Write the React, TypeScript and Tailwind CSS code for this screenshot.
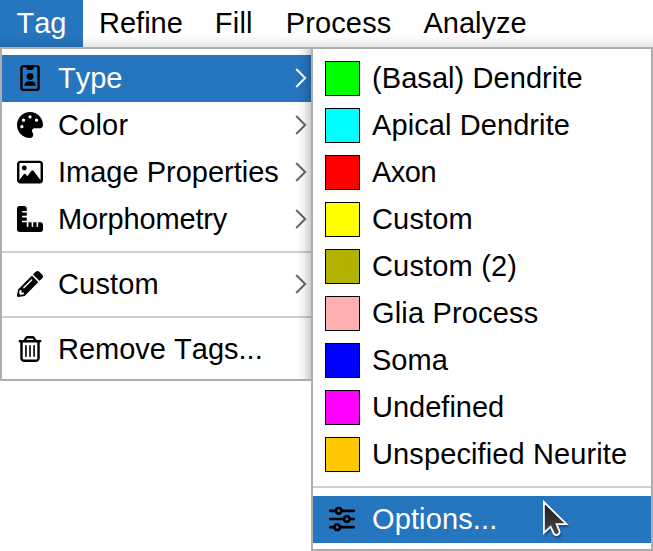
import type { ReactNode } from "react";
import { FaPencilAlt } from "react-icons/fa";
import { FaPalette, FaRegImage, FaRegTrashCan, FaRulerCombined } from "react-icons/fa6";

const types = [
  { label: "(Basal) Dendrite", color: "bg-[#00ff00]", tracking: "tracking-[0.07px]" },
  { label: "Apical Dendrite", color: "bg-[#00ffff]", tracking: "tracking-[0.09px]" },
  { label: "Axon", color: "bg-[#ff0000]", tracking: "tracking-[-0.5px]" },
  { label: "Custom", color: "bg-[#ffff00]", tracking: "tracking-[0.17px]" },
  { label: "Custom (2)", color: "bg-[#b2b200]", tracking: "tracking-[0.17px]" },
  { label: "Glia Process", color: "bg-[#ffafaf]", tracking: "tracking-[0.17px]" },
  { label: "Soma", color: "bg-[#0000ff]", tracking: "" },
  { label: "Undefined", color: "bg-[#ff00ff]", tracking: "" },
  { label: "Unspecified Neurite", color: "bg-[#ffc800]", tracking: "tracking-[0.11px]" },
];

function Chevron() {
  return (
    <svg className="mr-1 ml-auto shrink-0" width="12" height="20" viewBox="0 0 12 20" fill="none" stroke="currentColor" strokeWidth="2">
      <path d="M1.2 1 10.2 10 1.2 19" />
    </svg>
  );
}

function Badge() {
  return (
    <svg width="20" height="26" viewBox="0 0 384 512" fill="currentColor">
      <path
        fillRule="evenodd"
        d="M64 0H320A64 64 0 0 1 384 64V448A64 64 0 0 1 320 512H64A64 64 0 0 1 0 448V64A64 64 0 0 1 64 0ZM64 46A18 18 0 0 0 46 64V448A18 18 0 0 0 64 466H320A18 18 0 0 0 338 448V64A18 18 0 0 0 320 46H264V60A34 34 0 0 1 230 96H154A34 34 0 0 1 120 60V46Z"
      />
      <circle cx="192" cy="226" r="68" />
      <path d="M80 410C80 356 116 320 162 320H222C268 320 304 356 304 410Z" />
    </svg>
  );
}

function Sliders() {
  return (
    <svg width="26" height="26" viewBox="0 0 26 26" fill="none" stroke="currentColor" strokeWidth="2.7" strokeLinecap="round">
      <path d="M1.3 4.8H6.5M13 4.8H24.7M1.3 13H14.5M21 13H24.7M1.3 21.2H5M11.5 21.2H24.7" />
      <circle cx="9.7" cy="4.8" r="2.8" />
      <circle cx="17.8" cy="13" r="2.8" />
      <circle cx="8.2" cy="21.2" r="2.8" />
    </svg>
  );
}

type ItemProps = { icon: ReactNode; label: string; arrow?: boolean; selected?: boolean; tracking?: string };

function Item({ icon, label, arrow, selected, tracking = "" }: ItemProps) {
  return (
    <div className={selected ? "flex h-[47px] items-center bg-[#2675bf] pb-px pl-[15px] text-white" : "flex h-[47px] items-center pb-px pl-[15px]"}>
      <span className="mr-[15px] flex w-[26px] shrink-0 justify-center text-[26px] text-black">{icon}</span>
      <span className={`pb-px whitespace-nowrap ${tracking}`}>{label}</span>
      {arrow && (
        <span className={selected ? "ml-auto text-white" : "ml-auto text-[#666]"}>
          <Chevron />
        </span>
      )}
    </div>
  );
}

function Separator() {
  return <div className="my-2 h-0.5 bg-[#cecece]" />;
}

export default function App() {
  return (
    <div className="relative h-[551px] w-[653px] overflow-hidden bg-white font-['Liberation_Sans',Arial,sans-serif] text-[29px] leading-[34px] text-black [font-kerning:none]">
      <nav className="relative flex h-[47px] items-center whitespace-nowrap">
        <span className="flex h-full w-[83px] items-center justify-center bg-[#2675bf] pb-0.5 text-white">Tag</span>
        <div className="flex gap-8 pb-0.5 pl-4">
          <span>Refine</span>
          <span className="tracking-[0.2px]">Fill</span>
          <span className="pl-px tracking-[0.14px]">Process</span>
          <span>Analyze</span>
        </div>
        <div className="absolute inset-x-0 bottom-0 h-3 bg-linear-to-t from-black/10 via-black/4 to-transparent" />
      </nav>
      <div className="flex items-start">
        <div className="relative w-[311px] border-y-2 border-l-2 border-[#aeaeae] bg-white py-1.5">
          <Item icon={<Badge />} label="Type" arrow selected />
          <Item icon={<FaPalette />} label="Color" arrow tracking="tracking-[0.2px]" />
          <Item icon={<FaRegImage />} label="Image Properties" arrow />
          <Item icon={<FaRulerCombined />} label="Morphometry" arrow tracking="tracking-[-0.15px]" />
          <Separator />
          <Item icon={<FaPencilAlt />} label="Custom" arrow tracking="tracking-[0.17px]" />
          <Separator />
          <Item icon={<FaRegTrashCan />} label="Remove Tags..." />
          <div className="absolute inset-y-0 right-0 w-3.5 bg-linear-to-l from-black/20 via-black/6 to-transparent" />
        </div>
        <div className="h-[504px] w-[342px] border-2 border-[#aeaeae] bg-white py-1.5">
          {types.map((t) => (
            <div key={t.label} className="flex h-[47px] items-center pl-3">
              <span className={`mr-3 size-[35px] shrink-0 border border-black ${t.color}`} />
              <span className={`pb-0.5 whitespace-nowrap ${t.tracking}`}>{t.label}</span>
            </div>
          ))}
          <Separator />
          <div className="flex h-[47px] items-center gap-[17px] bg-[#2675bf] pb-px pl-4 text-white">
            <span className="text-black">
              <Sliders />
            </span>
            <span className="pb-px tracking-[0.12px]">Options...</span>
          </div>
        </div>
      </div>
      <svg className="absolute top-[496px] left-[539px] drop-shadow-[1px_2px_1px_rgba(0,0,0,0.35)]" width="34" height="44" viewBox="0 0 34 44">
        <defs>
          <linearGradient id="pointer" x1="0" y1="0" x2="0" y2="1">
            <stop offset="0" stopColor="#181818" />
            <stop offset="1" stopColor="#4a4a4a" />
          </linearGradient>
        </defs>
        <path
          d="M4.9 6V37L11.6 30.7L14.8 37.5Q16 39.8 18.5 38.9Q21.3 37.6 20.4 35L17.6 28.2H27.5Z"
          fill="url(#pointer)"
          stroke="white"
          strokeWidth="1.8"
        />
      </svg>
    </div>
  );
}
